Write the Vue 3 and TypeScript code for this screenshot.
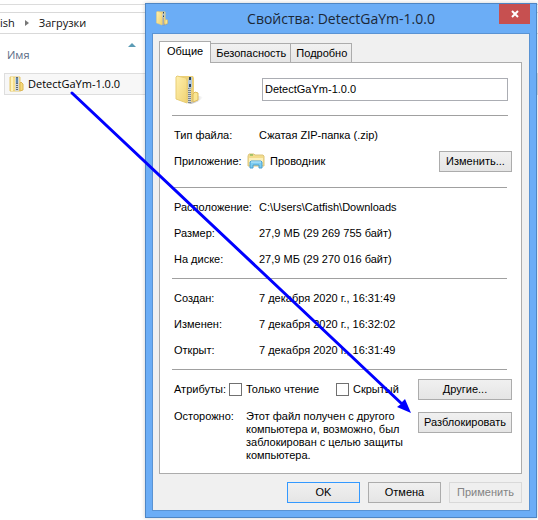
<script setup lang="ts">
import { ref } from 'vue'

interface Row {
  label: string
  value: string
}

const fileName = ref('DetectGaYm-1.0.0')
const readOnly = ref(false)
const hidden = ref(false)

const tabs = ['Общие', 'Безопасность', 'Подробно']
const activeTab = ref('Общие')

const sizeRows: Row[] = [
  { label: 'Расположение:', value: 'C:\\Users\\Catfish\\Downloads' },
  { label: 'Размер:', value: '27,9 МБ (29 269 755 байт)' },
  { label: 'На диске:', value: '27,9 МБ (29 270 016 байт)' },
]
const dateRows: Row[] = [
  { label: 'Создан:', value: '7 декабря 2020 г., 16:31:49' },
  { label: 'Изменен:', value: '7 декабря 2020 г., 16:32:02' },
  { label: 'Открыт:', value: '7 декабря 2020 г., 16:31:49' },
]
</script>

<template>
  <div class="desktop">
    <svg class="defs" width="0" height="0" aria-hidden="true">
      <defs>
        <linearGradient id="folder" x1="0" y1="0" x2="1" y2="1">
          <stop offset="0" stop-color="#fff0ae" />
          <stop offset="1" stop-color="#f0d272" />
        </linearGradient>
        <linearGradient id="shade" x1="0" y1="0" x2="1" y2="0">
          <stop offset="0" stop-color="#808080" stop-opacity="0.7" />
          <stop offset="1" stop-color="#808080" stop-opacity="0" />
        </linearGradient>
        <symbol id="zip" viewBox="0 0 32 32">
          <path d="M14 30 L22 22 L30 24 Q27 29 18 31 Z" fill="url(#shade)" />
          <path d="M5 3 L20 3 L21 5 V21 L19 29 H14 Z" fill="#ecd078" />
          <path d="M20 21 L22 19 L25 20 V27 L20 29 Z" fill="#fae694" stroke="#deba58" />
          <path d="M3 4 L4 3 L13 5 L14 8 V30 L3 26 Z" fill="url(#folder)" stroke="#e8cd75" />
          <path d="M16.500 8 V30" stroke="#cfd3d4" stroke-width="3" />
          <path d="M16.500 15 V30" stroke="#7d868b" stroke-width="3" stroke-dasharray="1 1" />
          <path d="M16 4 H19 V9 L19 14 L17 16 L15 14 V9 Z" fill="#b3c9df" />
          <path d="M17 4 V7 M17 11 V14" stroke="#2d4258" stroke-width="2" />
        </symbol>
      </defs>
    </svg>

    <main class="explorer">
      <nav class="address">
        <a href="#">ish</a>
        <svg width="4" height="6" viewBox="0 0 4 6" aria-hidden="true"><path d="M0 0 L4 3 L0 6 Z" fill="#777" /></svg>
        <a href="#">Загрузки</a>
      </nav>
      <div class="column-head">
        <span>Имя</span>
        <svg width="8" height="4" viewBox="0 0 8 4" aria-hidden="true"><path d="M0 4 L4 0 L8 4 Z" fill="#5b9bb5" /></svg>
      </div>
      <div class="file">
        <svg width="16" height="16" viewBox="0 0 16 16" aria-hidden="true">
          <path d="M1 1 H11 V15 H1 Z" fill="#f7e08c" stroke="#e6c96c" />
          <path d="M3 1 V15" stroke="#fff3bb" stroke-width="2" />
          <path d="M11 7 L12 6 L14 8 V14 L11 15 Z" fill="#f5d97a" stroke="#dcb654" />
          <path d="M8 1 V15" stroke="#d5d8d6" stroke-width="4" />
          <path d="M8 1 V15" stroke="#5f6b75" stroke-width="2" stroke-dasharray="1 1" />
          <path d="M8 2 V7" stroke="#6389ab" stroke-width="2" />
        </svg>
        <span>DetectGaYm-1.0.0</span>
      </div>
    </main>

    <section class="dialog" role="dialog" aria-labelledby="dialog-title">
      <header class="titlebar">
        <svg class="title-icon" width="16" height="16" aria-hidden="true"><use href="#zip" /></svg>
        <h1 id="dialog-title">Свойства: DetectGaYm-1.0.0</h1>
        <button class="close" type="button" aria-label="Закрыть">
          <svg width="8" height="8" viewBox="0 0 8 8" aria-hidden="true"><path d="M1 1 L7 7 M7 1 L1 7" stroke="#fff" stroke-width="2" /></svg>
        </button>
      </header>

      <form class="client" @submit.prevent>
        <div class="tabs" role="tablist">
          <button
            v-for="tab in tabs"
            :key="tab"
            type="button"
            role="tab"
            class="tab"
            :class="{ active: tab === activeTab }"
            :aria-selected="tab === activeTab"
            @click="activeTab = tab"
          >{{ tab }}</button>
        </div>

        <div class="panel" role="tabpanel">
          <div class="group name-row">
            <svg width="32" height="32" aria-hidden="true"><use href="#zip" /></svg>
            <input v-model="fileName" class="name" type="text" aria-label="Имя файла" />
          </div>

          <div class="group kind">
            <div class="row">
              <span>Тип файла:</span>
              <span>Сжатая ZIP-папка (.zip)</span>
            </div>
            <div class="row app-row">
              <span>Приложение:</span>
              <span class="app">
                <svg width="18" height="16" viewBox="0 0 18 16" aria-hidden="true">
                  <path d="M1 3 L2 1 H7 L8 2 H16 L17 3 V13 H1 Z" fill="#f3dc8c" stroke="#dcc57c" />
                  <path d="M2 5 H16 V12 H2 Z" fill="#fbf0bc" />
                  <path d="M3 2 H6" stroke="#5fae4b" />
                  <path d="M3 15 V9 L4 8 H14 L15 9 V15 H12 V12 H6 V15 Z" fill="#7cccf0" stroke="#4a9fd0" />
                  <path d="M4 9 H14" stroke="#c2ebfb" />
                </svg>
                Проводник
              </span>
              <button class="btn" type="button">Изменить...</button>
            </div>
          </div>

          <div class="group">
            <div v-for="row in sizeRows" :key="row.label" class="row">
              <span>{{ row.label }}</span>
              <span>{{ row.value }}</span>
            </div>
          </div>

          <div class="group">
            <div v-for="row in dateRows" :key="row.label" class="row">
              <span>{{ row.label }}</span>
              <span>{{ row.value }}</span>
            </div>
          </div>

          <div class="attributes">
            <span>Атрибуты:</span>
            <label class="check"><input v-model="readOnly" type="checkbox" />Только чтение</label>
            <label class="check"><input v-model="hidden" type="checkbox" />Скрытый</label>
            <button class="btn wide" type="button">Другие...</button>
          </div>

          <div class="warning">
            <span>Осторожно:</span>
            <p>Этот файл получен с другого компьютера и, возможно, был заблокирован с целью защиты компьютера.</p>
            <button class="btn wide" type="button">Разблокировать</button>
          </div>
        </div>

        <footer class="actions">
          <button class="btn default" type="submit">OK</button>
          <button class="btn" type="button">Отмена</button>
          <button class="btn" type="button" disabled>Применить</button>
        </footer>
      </form>
    </section>

    <svg class="arrow" width="420" height="420" viewBox="0 0 420 420" aria-hidden="true">
      <path d="M72 93 L402 404" stroke="#0000ff" stroke-width="3" stroke-linecap="round" />
      <path d="M411 413 L397 407 L401 404 L402 402 L405 399 Z" fill="#0000ff" />
    </svg>
  </div>
</template>

<style>
body {
  margin: 0;
  background: #fff;
}
</style>

<style scoped>
.desktop {
  position: relative;
  min-height: 100vh;
  overflow: hidden;
  font: 11px/13px "Liberation Sans", Arial, sans-serif;
  color: #000;
}

.defs {
  position: absolute;
}

.explorer {
  padding-top: 4px;
  font: 11px/20px "Open Sans", "Noto Sans", sans-serif;
}

.explorer::before {
  content: "";
  display: block;
  height: 7px;
  border-top: 1px solid #dcdcdc;
}

.address {
  display: flex;
  align-items: center;
  gap: 10px;
  height: 20px;
  border-top: 1px solid #d9d9d9;
  border-bottom: 1px solid #d9d9d9;
}

.address a {
  color: #111;
  text-decoration: none;
}

.column-head {
  display: flex;
  align-items: flex-start;
  height: 28px;
  padding: 11px 7px 0;
  gap: 98px;
  color: #5a6b85;
}

.column-head svg {
  margin-top: -2px;
}

.file {
  display: flex;
  align-items: center;
  gap: 3px;
  height: 20px;
  margin-left: 4px;
  padding-left: 4px;
  background: #f7f7f7;
  border: 1px solid #dedede;
}

.dialog {
  position: absolute;
  top: 3px;
  left: 145px;
  right: 1px;
  padding: 0 6px;
  background: #6badf6;
  border: 1px solid #4e86c4;
  border-bottom-width: 1px;
  padding-bottom: 6px;
  box-shadow: 0 0 4px rgba(0, 0, 0, 0.2);
}

.titlebar {
  display: flex;
  align-items: flex-start;
  height: 29px;
  padding-left: 3px;
}

.title-icon {
  margin-top: 6px;
}

h1 {
  flex: 1;
  margin: 0;
  padding-left: 12px;
  font: 14px/29px "Open Sans", "Noto Sans", sans-serif;
  text-align: center;
  color: #1c2836;
}

.close {
  display: flex;
  align-items: center;
  justify-content: center;
  width: 31px;
  height: 20px;
  padding: 0;
  border: 0;
  background: #c75050;
}

.client {
  padding: 7px 7px 7px 6px;
  background: #f0f0f0;
  border: 1px solid #5a93d3;
}

.tabs {
  display: flex;
  align-items: flex-end;
}

.tab {
  height: 19px;
  margin: 0 0 0 -1px;
  padding: 0 4px 0 5px;
  font: inherit;
  color: #000;
  background: linear-gradient(#f1f1f1, #e6e6e6);
  border: 1px solid #acacac;
  border-bottom: 0;
}

.tab.active {
  position: relative;
  z-index: 1;
  box-sizing: content-box;
  height: 19px;
  margin: 0 0 -1px;
  padding: 0 7px 2px;
  background: #fff;
}

.panel {
  padding: 0 9px 11px 12px;
  background: #fff;
  border: 1px solid #acacac;
}

.group {
  margin-right: 5px;
  padding: 6px 0 6px 2px;
  border-bottom: 1px solid #a0a0a0;
}

.name-row {
  display: flex;
  align-items: center;
  gap: 57px;
  height: 32px;
  margin-right: 4px;
  padding: 10px 0 10px 1px;
}

.name {
  flex: 1;
  min-width: 0;
  height: 23px;
  box-sizing: border-box;
  margin: 0;
  padding: 0 2px;
  font: inherit;
  color: #000;
  background: #fff;
  border: 1px solid #abadb3;
}

.row {
  display: grid;
  grid-template-columns: 85px 1fr;
  align-items: center;
  height: 26px;
}

.kind {
  padding-bottom: 13px;
}

.app-row {
  grid-template-columns: 73px 1fr auto;
  margin-right: -5px;
}

.app {
  display: flex;
  align-items: center;
  gap: 5px;
}

.btn {
  width: 73px;
  height: 21px;
  box-sizing: border-box;
  padding: 0;
  font: inherit;
  color: #000;
  background: linear-gradient(#f0f0f0, #e5e5e5);
  border: 1px solid #acacac;
}

.btn.wide {
  width: 94px;
}

.btn.default {
  border-color: #3399ff;
}

.btn:disabled {
  color: #838383;
  background: #efefef;
  border-color: #d9d9d9;
}

.attributes {
  display: grid;
  grid-template-columns: 55px 107px 1fr auto;
  align-items: center;
  padding: 9px 0 0 2px;
}

.check {
  display: flex;
  align-items: center;
  gap: 4px;
}

.check input {
  appearance: none;
  width: 13px;
  height: 13px;
  margin: 0;
  background: #fff;
  border: 1px solid #707070;
}

.warning {
  display: grid;
  grid-template-columns: 72px 1fr auto;
  align-items: start;
  padding: 10px 0 0 2px;
}

.warning p {
  margin: 0;
}

.warning .btn {
  margin-top: 2px;
}

.actions {
  display: flex;
  justify-content: flex-end;
  gap: 8px;
  padding-top: 8px;
}

.arrow {
  position: absolute;
  top: 0;
  left: 0;
  pointer-events: none;
}
</style>
